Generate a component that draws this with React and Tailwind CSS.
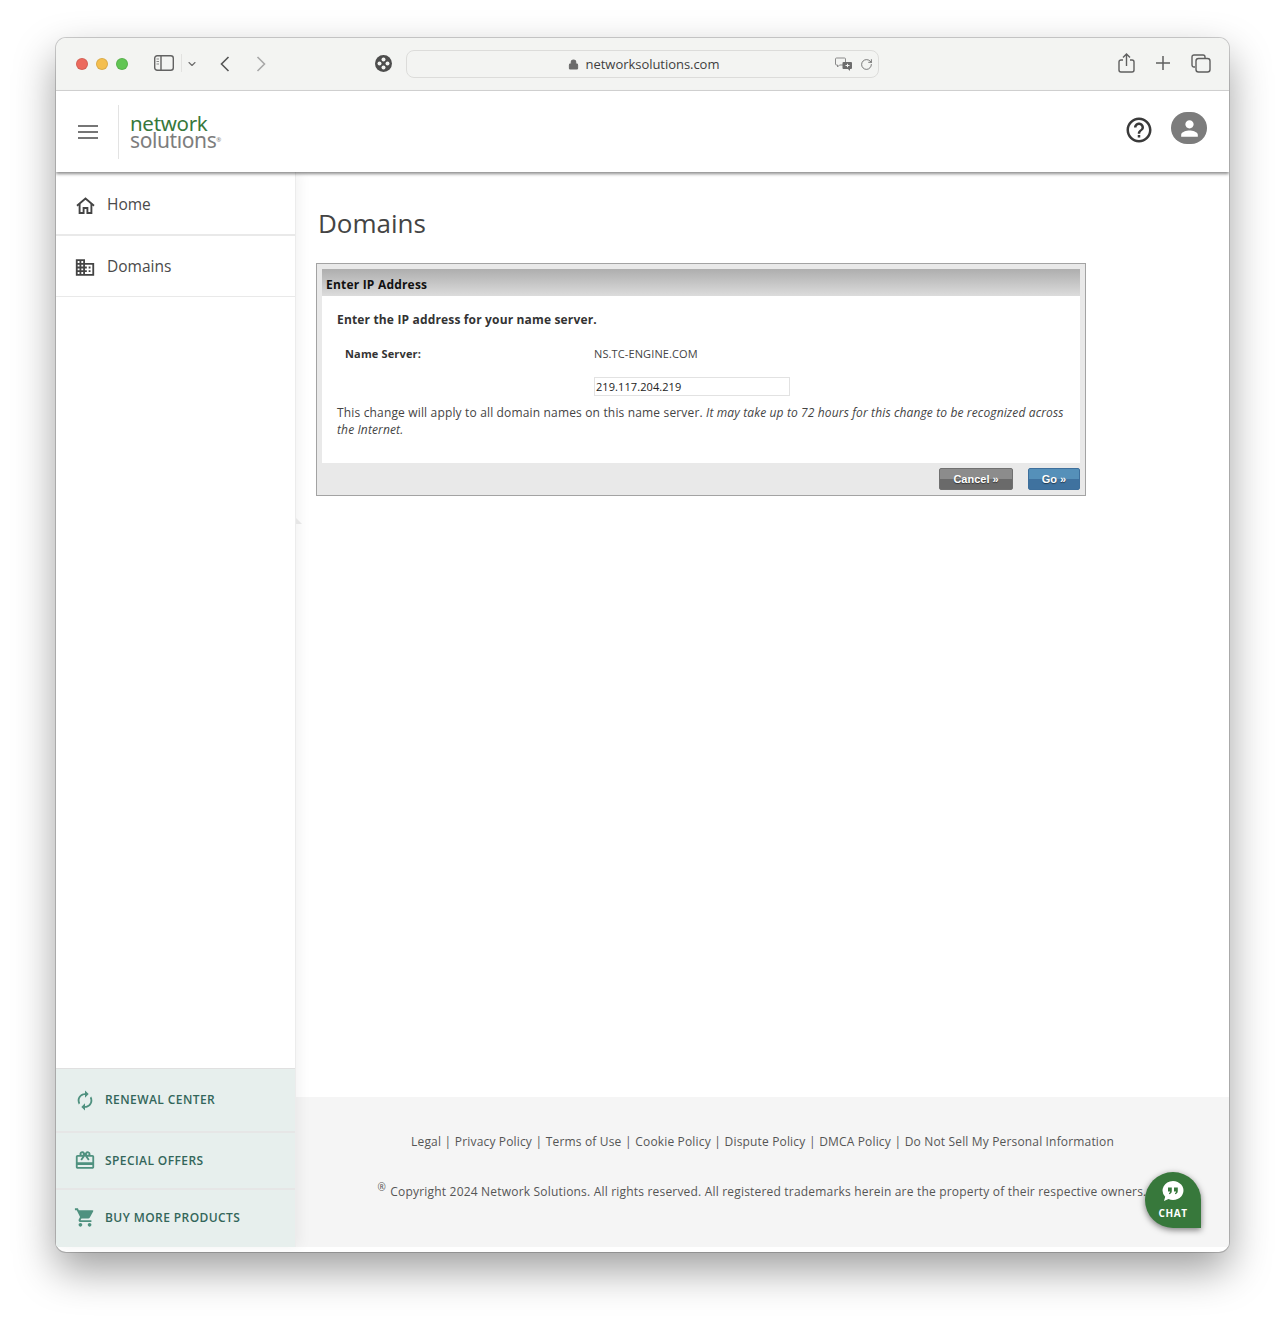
import React from "react";
import { ChevronDown, Lock, RotateCw } from "lucide-react";
import { MdDomain, MdAutorenew, MdOutlineCardGiftcard, MdShoppingCart, MdPerson, MdHelpOutline } from "react-icons/md";

const font = { fontFamily: '"Open Sans", sans-serif' };

function Dot({ cls }) {
  return <span className={`block w-3 h-3 rounded-full border border-black/10 ${cls}`} />;
}

function PrivacyIcon() {
  return (
    <svg width="17" height="17" viewBox="0 0 17 17">
      <circle cx="8.5" cy="8.5" r="8.5" fill="#4d4d4d" />
      <circle cx="8.5" cy="4.5" r="2" fill="#f3f4f2" />
      <circle cx="8.5" cy="12.5" r="2" fill="#f3f4f2" />
      <circle cx="4.5" cy="8.5" r="2" fill="#f3f4f2" />
      <circle cx="12.5" cy="8.5" r="2" fill="#f3f4f2" />
    </svg>
  );
}

function TranslateIcon() {
  return (
    <svg width="18" height="14" viewBox="0 0 18 14">
      <path d="M1.5 1h8a1 1 0 0 1 1 1v5a1 1 0 0 1-1 1h-5l-2 2v-2h-1a1 1 0 0 1-1-1V2a1 1 0 0 1 1-1z" fill="none" stroke="#8a8a8a" />
      <path d="M8.5 5h7.5a1 1 0 0 1 1 1v5a1 1 0 0 1-1 1h-1v2l-2-2H8.500a1 1 0 0 1-1-1V6a1 1 0 0 1 1-1z" fill="#6d6d6d" />
      <path d="M10.500 8.500h4M12.500 6.800v3.400" stroke="#f3f4f2" />
    </svg>
  );
}

function SidebarIcon() {
  return (
    <svg width="20" height="16" viewBox="0 0 20 16" className="ml-[26px] mb-[2px]" fill="none" stroke="#626262">
      <rect x="0.700" y="0.700" width="18.600" height="14.600" rx="2.500" strokeWidth="1.400" />
      <path d="M7 1v14" strokeWidth="1.400" />
      <path d="M2.500 4h2.500M2.500 6.500h2.500M2.500 9h2.500" strokeWidth="1.200" stroke="#8a8a8a" />
    </svg>
  );
}

function HomeIcon() {
  return (
    <svg width="19" height="17" viewBox="0 0 19 17" fill="none" stroke="#444" strokeWidth="1.900">
      <path d="M1 8.700 9.500 1.500 18 8.700" />
      <path d="M3.600 7v9h4v-5h3.800v5h4V7" />
    </svg>
  );
}

function NavItem({ icon, label, className }) {
  return (
    <div className={`flex items-center pl-[18px] text-[15.500px] text-[#4a4a4a] border-[#e9e9e9] ${className}`}>
      <span className="w-[22px] flex justify-center">{icon}</span>
      <span className="ml-[11px]">{label}</span>
    </div>
  );
}

function PromoItem({ icon, label, className }) {
  return (
    <div className={`flex items-center pl-[18px] text-[12px] font-semibold tracking-[0.42px] text-[#33665a] ${className}`}>
      <span className="w-[22px] flex justify-center">{icon}</span>
      <span className="ml-[9px]">{label}</span>
    </div>
  );
}

function FooterLink({ children, last }) {
  return (
    <>
      <span>{children}</span>
      {!last && <span className="mx-[3.500px]">|</span>}
    </>
  );
}

export default function App() {
  return (
    <div className="w-full h-[1326px] bg-white overflow-hidden pt-[38px] pl-[56px]" style={font}>
      <div className="relative w-[1173px] h-[1214px] rounded-[10px] bg-white flex flex-col shadow-[0_0_0_1px_rgba(0,0,0,0.18),0_18px_42px_rgba(0,0,0,0.38)] overflow-hidden">
        {/* Browser chrome */}
        <div className="h-[53px] shrink-0 bg-[#f3f4f2] border-b border-[#d4d4d4] flex items-center relative">
          <div className="flex items-center gap-2 ml-5">
            <Dot cls="bg-[#ec6a5e]" />
            <Dot cls="bg-[#f4bf4f]" />
            <Dot cls="bg-[#61c554]" />
          </div>
          <SidebarIcon />
          <div className="ml-[7px] w-px h-[18px] bg-[#e2e2e0] mb-[2px]" />
          <ChevronDown size={12} strokeWidth={2.200} className="text-[#6b6b6b] ml-[4px]" />
          <svg width="10" height="16" viewBox="0 0 10 16" fill="none" stroke="#555" strokeWidth="1.600" className="ml-[22px]">
            <path d="M8.500 1 1.500 8l7 7" />
          </svg>
          <svg width="10" height="16" viewBox="0 0 10 16" fill="none" stroke="#a8a8a8" strokeWidth="1.600" className="ml-[26px]">
            <path d="M1.500 1l7 7-7 7" />
          </svg>
          <div className="ml-[109px] mb-[2px]"><PrivacyIcon /></div>
          <div className="ml-[14px] mb-[1px] w-[473px] h-[28px] rounded-[8px] border border-[#dcdcda] bg-[#f3f4f2] flex items-center justify-center relative text-[13px] tracking-[-0.04px] text-[#3f3f3f]">
            <Lock size={11} strokeWidth={2.200} className="text-[#6b6b6b] mr-[7px] ml-[2px] mt-[1px]" fill="#6b6b6b" />
            <span className="mt-[2px]">networksolutions.com</span>
            <div className="absolute right-[25px] top-[6px]"><TranslateIcon /></div>
            <RotateCw size={13} strokeWidth={1.400} className="absolute right-[5px] top-[7px] text-[#555]" />
          </div>
          <svg width="17" height="20" viewBox="0 0 17 20" fill="none" stroke="#5f5f5f" strokeWidth="1.400" className="ml-[239px] mb-[3px]">
            <path d="M5 7H3a2 2 0 0 0-2 2v8a2 2 0 0 0 2 2h11a2 2 0 0 0 2-2V9a2 2 0 0 0-2-2h-2" />
            <path d="M8.500 13V1M5 4.500 8.500 1 12 4.500" />
          </svg>
          <svg width="16" height="16" viewBox="0 0 16 16" fill="none" stroke="#5f5f5f" strokeWidth="1.500" className="ml-[20px] mb-[2px]">
            <path d="M8 1v14M1 8h14" />
          </svg>
          <svg width="20" height="19" viewBox="0 0 20 19" fill="none" stroke="#5f5f5f" strokeWidth="1.400" className="ml-[20px] mb-[2px]">
            <path d="M4 13H3a2 2 0 0 1-2-2V3a2 2 0 0 1 2-2h9a2 2 0 0 1 2 2v1" />
            <rect x="5" y="4.500" width="14" height="13.500" rx="2.500" />
          </svg>
        </div>

        {/* Site header */}
        <div className="relative z-20 h-[81px] shrink-0 bg-white flex items-center shadow-[0_2px_3px_rgba(0,0,0,0.45)]">
          <svg width="20" height="14" viewBox="0 0 20 14" stroke="#4a4a4a" strokeWidth="1.600" className="ml-[22px] shrink-0">
            <path d="M0 1h20M0 7h20M0 13h20" />
          </svg>
          <div className="ml-[20px] h-[54px] w-px bg-[#e3e3e3]" />
          <div className="ml-[11px] flex flex-col" style={{ fontFamily: '"Noto Sans", sans-serif' }}>
            <span className="text-[20.500px] leading-[17px] text-[#37783b] tracking-[-0.3px]">network</span>
            <span className="text-[21px] leading-[17px] text-[#7d7d7d] tracking-[-0.4px] relative">
              solutıons<span className="absolute text-[6px] leading-[6px] top-[5px] ml-[0px]">®</span>
            </span>
          </div>
          <div className="ml-auto flex items-start mr-[22px] mb-[3px] gap-[17px]">
            <MdHelpOutline size={30} className="text-[#3a3a3a]" />
            <div className="w-9 h-[32px] rounded-full bg-[#7c7c7c] flex items-center justify-center -mt-[3px]">
              <MdPerson size={25} className="text-white" />
            </div>
          </div>
        </div>

        {/* Body */}
        <div className="flex-1 flex min-h-0">
          {/* Sidebar */}
          <aside className="relative z-10 w-[240px] shrink-0 flex flex-col justify-between bg-white mb-[5px] border-r border-[#ececec] shadow-[4px_0_12px_rgba(0,0,0,0.05)]">
            <div>
              <NavItem className="h-[64px] pt-[4px] border-b-2" icon={<HomeIcon />} label="Home" />
              <NavItem className="h-[61px] pt-[2px] border-b" icon={<MdDomain size={23} className="text-[#444]" />} label="Domains" />
            </div>
            <div className="bg-[#e7efed] border-t border-[#e0e0e0]">
              <PromoItem className="h-[64px] border-b-2 border-[#e6e6e6]" icon={<MdAutorenew size={23} className="text-[#4f917f]" />} label="RENEWAL CENTER" />
              <PromoItem className="h-[57px] border-b-2 border-[#e6e6e6]" icon={<MdOutlineCardGiftcard size={23} className="text-[#4f917f]" />} label="SPECIAL OFFERS" />
              <PromoItem className="h-[57px] pb-[2px]" icon={<MdShoppingCart size={23} className="text-[#4f917f]" />} label="BUY MORE PRODUCTS" />
            </div>
            <svg width="6" height="6" viewBox="0 0 6 6" className="absolute left-[240px] top-[346px]">
              <path d="M0 0 6 6H0z" fill="#e6e6e6" />
            </svg>
          </aside>

          {/* Main */}
          <main className="flex-1 min-w-0 flex flex-col">
            <div className="flex-1 pl-5 pt-[33px]">
              <h1 className="text-[26px] leading-[36px] text-[#444] font-normal ml-[2px]">Domains</h1>
              <section className="mt-[22px] w-[770px] h-[233px] border border-[#a3a3a3] bg-[#e9e9e9] px-[5px] pt-[5px] flex flex-col text-[#333]">
                <div className="h-[27px] shrink-0 bg-gradient-to-b from-[#aeaeae] to-[#dcdcdc] px-1 flex items-end pb-[2px] text-[12px] font-bold tracking-[0.2px] text-[#111]">
                  Enter IP Address
                </div>
                <div className="bg-white h-[167px] shrink-0 pl-[15px] pr-[14px] pt-[15px] text-[12px] tracking-[0.16px]">
                  <p className="font-bold leading-[18px] text-[#333]">Enter the IP address for your name server.</p>
                  <div className="grid grid-cols-[249px_1fr] mt-[17px] pl-2 items-center">
                    <span className="font-bold text-[11px] leading-4 tracking-[0.15px] text-[#333]">Name Server:</span>
                    <span className="text-[11px] leading-4 tracking-[0.12px] text-[#444]">NS.TC-ENGINE.COM</span>
                    <span />
                    <input
                      readOnly
                      value="219.117.204.219"
                      className="mt-[15px] w-[196px] h-[19px] border border-[#e2e2e2] px-[1px] text-[11px] tracking-[0.08px] text-[#222] outline-none"
                    />
                  </div>
                  <p className="mt-[8px] leading-[17px] text-[#444]">
                    This change will apply to all domain names on this name server. <em className="tracking-[0.13px]">It may take up to 72 hours for this change to be recognized across the Internet.</em>
                  </p>
                </div>
                <div className="flex-1 flex justify-end items-start pt-[5px] gap-[15px]" style={{ fontFamily: '"Liberation Sans", Arial, sans-serif' }}>
                  <button className="w-[74px] h-[22px] rounded-[2px] border border-[#707070] bg-[linear-gradient(#8c8c8c_50%,#6a6a6a_50%)] text-white text-[11px] font-bold [text-shadow:0_1px_1px_rgba(0,0,0,0.5)]">Cancel »</button>
                  <button className="w-[52px] h-[22px] rounded-[2px] border border-[#3d6f9c] bg-[linear-gradient(#5590b9_50%,#3f729f_50%)] text-white text-[11px] font-bold [text-shadow:0_1px_1px_rgba(0,0,0,0.5)]">Go »</button>
                </div>
              </section>
            </div>

            <footer className="relative h-[150px] shrink-0 bg-[#f5f5f5] mb-[5px] text-[12px] tracking-[0.16px] text-[#555] flex flex-col items-center">
              <div className="mt-[36px] leading-[18px] flex">
                <FooterLink>Legal</FooterLink>
                <FooterLink>Privacy Policy</FooterLink>
                <FooterLink>Terms of Use</FooterLink>
                <FooterLink>Cookie Policy</FooterLink>
                <FooterLink>Dispute Policy</FooterLink>
                <FooterLink>DMCA Policy</FooterLink>
                <FooterLink last>Do Not Sell My Personal Information</FooterLink>
              </div>
              <div className="mt-[32px] leading-[18px] ml-[-1px] whitespace-nowrap tracking-[0.19px]">
                <sup className="text-[10px] mr-[1px]">®</sup> Copyright 2024 Network Solutions. All rights reserved. All registered trademarks herein are the property of their respective owners.
              </div>
              <div className="absolute right-[28px] top-[75px] w-[56px] h-[56px] rounded-[28px] rounded-br-none bg-[#37783b] shadow-[0_2px_6px_rgba(0,0,0,0.5)] flex flex-col items-center pt-[9px]">
                <svg width="22" height="21" viewBox="0 0 22 21">
                  <path d="M11 0a10.500 9.500 0 1 1-4.500 18.100L2 20l1.200-4.300A10.500 9.500 0 0 1 11 0z" fill="#fff" />
                  <path d="M6 6.500h3.800v3.600c0 1.700-.9 2.800-2.500 3.100l-.4-1c.8-.3 1.200-.8 1.200-1.600H6zM12 6.500h3.800v3.600c0 1.700-.9 2.800-2.500 3.100l-.4-1c.8-.3 1.200-.8 1.200-1.600H12z" fill="#37783b" />
                </svg>
                <span className="text-[10px] leading-[12px] font-bold text-white tracking-[0.6px] mt-[5px]">CHAT</span>
              </div>
            </footer>
          </main>
        </div>
      </div>
    </div>
  );
}
